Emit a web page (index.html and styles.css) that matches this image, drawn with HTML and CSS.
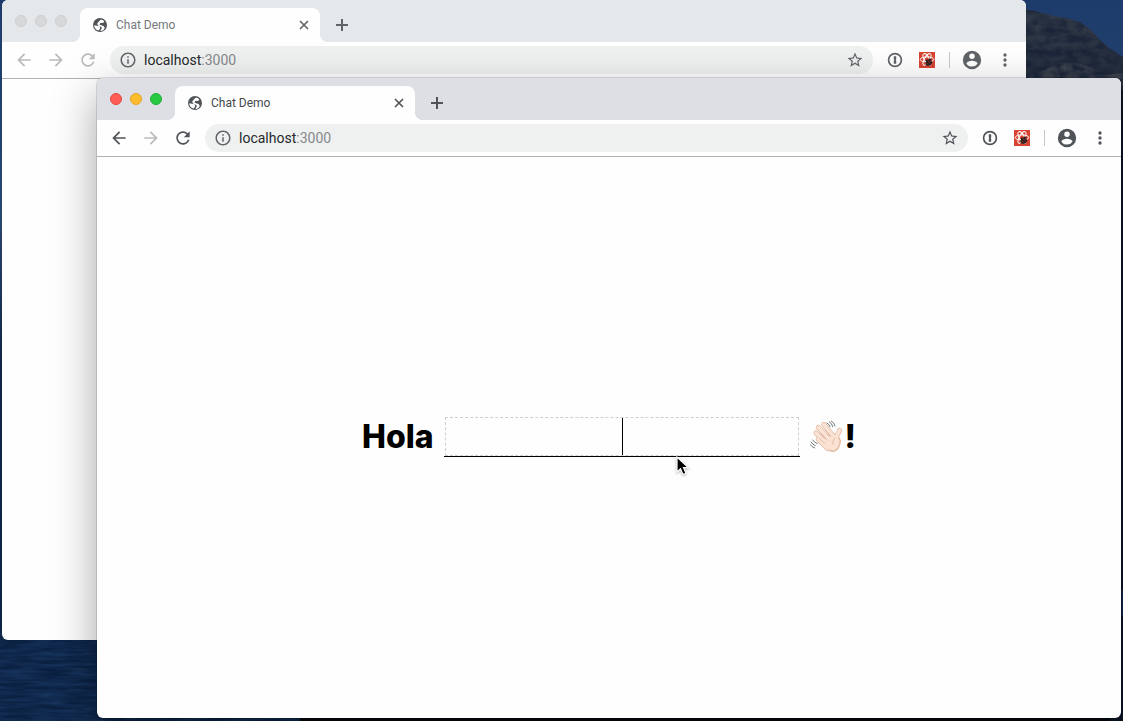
FILE: index.html
```html
<!DOCTYPE html>
<html lang="en">
<head>
<meta charset="utf-8">
<title>Chat Demo</title>
<link rel="stylesheet" href="styles.css">
</head>
<body>
<svg class="sprites" aria-hidden="true">
  <symbol id="globe" viewBox="0 0 24 24"><path d="M12 0a12 12 0 1 0 0 24 12 12 0 0 0 0-24zM2.200 12.500L9 13.500l3 1.500v3l-2 3.500C5.500 21 2 17 2.200 12.500zM13.500 2.500l4 1.500 2 3-3 1.500-3.500-.3-2 2.800 3 1.500 4 1 2.200 3-1.700 3.500-3.500 2.200-2.500-.7 2.500-3.500-.5-2.500-5-1.800-2.500-3.700 3-4z" fill-rule="evenodd"/></symbol>
  <symbol id="close" viewBox="0 0 10 10"><path d="M1 1l8 8M9 1L1 9" fill="none" stroke="currentColor" stroke-width="1.700"/></symbol>
  <symbol id="plus" viewBox="0 0 12 12"><path d="M6 0v12M0 6h12" fill="none" stroke="currentColor" stroke-width="2"/></symbol>
  <symbol id="back" viewBox="0 0 24 24"><path d="M20 11H7.800l5.600-5.600L12 4l-8 8 8 8 1.400-1.400L7.800 13H20z"/></symbol>
  <symbol id="forward" viewBox="0 0 24 24"><path d="M4 11h12.200l-5.600-5.600L12 4l8 8-8 8-1.400-1.400 5.600-5.600H4z"/></symbol>
  <symbol id="reload" viewBox="0 0 24 24"><path d="M17.650 6.350C16.200 4.900 14.210 4 12 4c-4.420 0-7.990 3.580-7.990 8s3.570 8 7.990 8c3.730 0 6.840-2.550 7.730-6h-2.080c-.82 2.330-3.040 4-5.650 4-3.310 0-6-2.690-6-6s2.690-6 6-6c1.660 0 3.140.69 4.220 1.780L13 11h7V4z"/></symbol>
  <symbol id="info" viewBox="0 0 24 24"><path d="M11 7h2v2h-2zm0 4h2v6h-2zm1-9C6.480 2 2 6.480 2 12s4.480 10 10 10 10-4.480 10-10S17.520 2 12 2zm0 18c-4.410 0-8-3.590-8-8s3.590-8 8-8 8 3.590 8 8-3.590 8-8 8z"/></symbol>
  <symbol id="star" viewBox="0 0 24 24"><path d="M22 9.240l-7.190-.62L12 2 9.190 8.630 2 9.240l5.460 4.730L5.820 21 12 17.270 18.180 21l-1.630-7.030L22 9.240zM12 15.400l-3.760 2.270 1-4.280-3.320-2.880 4.380-.38L12 6.100l1.710 4.040 4.380.38-3.320 2.880 1 4.280L12 15.400z"/></symbol>
  <symbol id="keyhole" viewBox="0 0 16 16"><circle cx="8" cy="8" r="6.400" fill="none" stroke="currentColor" stroke-width="1.700"/><path d="M6.800 4.200h2.400v3L8.700 8l.5.800v3H6.800v-3l.5-.8-.5-.8z"/></symbol>
  <symbol id="atom" viewBox="0 0 16 16">
    <path fill="#d94432" d="M0 0h16v16H0z"/>
    <g fill="none" stroke="#fff" stroke-width="1"><ellipse cx="8" cy="7.500" rx="6.800" ry="2.600"/><ellipse cx="8" cy="7.500" rx="6.500" ry="2.600" transform="rotate(60 8 7.500)"/><ellipse cx="8" cy="7.500" rx="6.500" ry="2.600" transform="rotate(120 8 7.500)"/></g>
    <path fill="#2b2020" d="M6.500 8.200l1.700-1 1 .8 1.500-1.700 1.800.6-.3 1.800 1.300 1.500-1 2.400-2.500 1.500-2-.7-1.700.3.700-1.800-1-1.400 1.200-.8z"/>
    <path d="M8.500 8.500l2.500 3M7.500 11.200l2 1M11 8l1 2" stroke="#b33d30" stroke-width=".6"/>
  </symbol>
  <symbol id="account" viewBox="0 0 24 24"><path d="M12 2a10 10 0 1 0 0 20 10 10 0 0 0 0-20zm0 3a3 3 0 1 1 0 6 3 3 0 0 1 0-6zm0 14.200c-2.500 0-4.710-1.280-6-3.220.03-1.990 4-3.080 6-3.080s5.970 1.090 6 3.080A7.200 7.200 0 0 1 12 19.200z" fill-rule="evenodd"/></symbol>
  <symbol id="more" viewBox="0 0 24 24"><circle cx="12" cy="6" r="2"/><circle cx="12" cy="12" r="2"/><circle cx="12" cy="18" r="2"/></symbol>
</svg>

<div class="desktop">
  <svg class="wallpaper" viewBox="0 0 1123 721" preserveAspectRatio="none" aria-hidden="true">
    <defs>
      <linearGradient id="sky" x2="0" y2="1"><stop offset="0" stop-color="#1e3c6b"/><stop offset=".3" stop-color="#29466f"/><stop offset=".5" stop-color="#102644"/><stop offset="1" stop-color="#0b2142"/></linearGradient>
      <linearGradient id="ridge" x2="0" y2="1"><stop offset="0" stop-color="#343c49"/><stop offset="1" stop-color="#1b2536"/></linearGradient>
      <filter id="waves" x="0" y="0" width="1" height="1" color-interpolation-filters="sRGB"><feTurbulence type="fractalNoise" baseFrequency=".03 .3" numOctaves="3" seed="4"/><feColorMatrix values="0 0 0 0 .1  0 0 0 0 .22  0 0 0 0 .39  0 0 0 1.600 -.5"/></filter>
      <filter id="rock" x="0" y="0" width="1" height="1" color-interpolation-filters="sRGB"><feTurbulence type="fractalNoise" baseFrequency=".09 .14" numOctaves="4" seed="8"/><feColorMatrix values="0 0 0 0 .1  0 0 0 0 .14  0 0 0 0 .22  0 0 0 2 -.6"/><feComposite in2="SourceGraphic" operator="in"/></filter>
    </defs>
    <path fill="url(#sky)" d="M0 0h1123v721H0z"/>
    <path fill="#0b2142" d="M0 630h300v91H0z"/>
    <path filter="url(#waves)" d="M0 630h300v91H0z"/>
    <path fill="url(#ridge)" d="M1020 8l14 3 20 5 12 2 14 4 12 9 8 9 9 8 14 9v60h-103z"/>
    <path fill="#3a414c" d="M1026 78l18-8 14-7 15-1 18 5 14 8 18-2v12h-97z"/>
    <path filter="url(#rock)" d="M1020 8l14 3 20 5 12 2 14 4 12 9 8 9 9 8 14 9v60h-103z"/>
    <path fill="#0c1627" d="M1100 90h23v631h-23z"/>
    <path fill="#10284a" d="M1118 590h5v26h-5z"/>
    <path fill="#06090f" d="M300 716h810v5H300z"/>
  </svg>

  <section class="window window-back" aria-label="Background window">
    <header class="tab-strip">
      <div class="lights"><button class="light" aria-label="Close window"></button><button class="light" aria-label="Minimize window"></button><button class="light" aria-label="Zoom window"></button></div>
      <div class="tab">
        <svg class="favicon"><use href="#globe"/></svg>
        <span class="tab-title">Chat Demo</span>
        <button class="icon-button" aria-label="Close tab"><svg class="close-icon"><use href="#close"/></svg></button>
      </div>
      <button class="icon-button new-tab" aria-label="New tab"><svg class="plus-icon"><use href="#plus"/></svg></button>
    </header>
    <nav class="toolbar">
      <div class="history">
        <button class="icon-button faded" aria-label="Back"><svg class="nav-icon"><use href="#back"/></svg></button>
        <button class="icon-button faded" aria-label="Forward"><svg class="nav-icon"><use href="#forward"/></svg></button>
        <button class="icon-button faded" aria-label="Reload"><svg class="nav-icon"><use href="#reload"/></svg></button>
      </div>
      <div class="address">
        <svg class="info-icon"><use href="#info"/></svg>
        <div class="url" role="textbox" contenteditable="true" spellcheck="false" aria-label="Address">localhost<span class="port">:3000</span></div>
        <button class="icon-button" aria-label="Bookmark"><svg class="star-icon"><use href="#star"/></svg></button>
      </div>
      <div class="extensions">
        <button class="icon-button" aria-label="Passwords"><svg class="extension-icon"><use href="#keyhole"/></svg></button>
        <button class="icon-button" aria-label="Developer tools"><svg class="extension-icon"><use href="#atom"/></svg></button>
        <span class="divider"></span>
        <button class="icon-button" aria-label="Profile"><svg class="account-icon"><use href="#account"/></svg></button>
        <button class="icon-button menu-button" aria-label="Menu"><svg class="nav-icon"><use href="#more"/></svg></button>
      </div>
    </nav>
    <main class="page"></main>
  </section>

  <section class="window window-front" aria-label="Active window">
    <header class="tab-strip">
      <div class="lights"><button class="light light-close" aria-label="Close window"></button><button class="light light-minimize" aria-label="Minimize window"></button><button class="light light-zoom" aria-label="Zoom window"></button></div>
      <div class="tab">
        <svg class="favicon"><use href="#globe"/></svg>
        <span class="tab-title">Chat Demo</span>
        <button class="icon-button" aria-label="Close tab"><svg class="close-icon"><use href="#close"/></svg></button>
      </div>
      <button class="icon-button new-tab" aria-label="New tab"><svg class="plus-icon"><use href="#plus"/></svg></button>
    </header>
    <nav class="toolbar">
      <div class="history">
        <button class="icon-button" aria-label="Back"><svg class="nav-icon"><use href="#back"/></svg></button>
        <button class="icon-button faded" aria-label="Forward"><svg class="nav-icon"><use href="#forward"/></svg></button>
        <button class="icon-button" aria-label="Reload"><svg class="nav-icon"><use href="#reload"/></svg></button>
      </div>
      <div class="address">
        <svg class="info-icon"><use href="#info"/></svg>
        <div class="url" role="textbox" contenteditable="true" spellcheck="false" aria-label="Address">localhost<span class="port">:3000</span></div>
        <button class="icon-button" aria-label="Bookmark"><svg class="star-icon"><use href="#star"/></svg></button>
      </div>
      <div class="extensions">
        <button class="icon-button" aria-label="Passwords"><svg class="extension-icon"><use href="#keyhole"/></svg></button>
        <button class="icon-button" aria-label="Developer tools"><svg class="extension-icon"><use href="#atom"/></svg></button>
        <span class="divider"></span>
        <button class="icon-button" aria-label="Profile"><svg class="account-icon"><use href="#account"/></svg></button>
        <button class="icon-button menu-button" aria-label="Menu"><svg class="nav-icon"><use href="#more"/></svg></button>
      </div>
    </nav>
    <main class="page">
      <form class="greeting">
        <label for="name">Hola</label>
        <div class="name-field"><input id="name" type="text" autocomplete="off"><span class="caret"></span></div>
        <div class="wave">
          <svg class="hand" viewBox="0 0 105 105" role="img" aria-label="Waving hand">
            <g fill="none" stroke-linecap="round" stroke-linejoin="round">
              <g stroke="#dfb79d" stroke-width="15"><path d="M41 16l34 42M25 25l36 40M18 42l36 36M25 61l28 27"/></g>
              <path d="M79 73C75 58 80 50 89 34" stroke="#dfb79d" stroke-width="15"/>
              <path d="M48 48L82 50 91 64C91 80 82 97 67 97C54 95 42 82 36 69z" fill="#f7dfcf" stroke="#dfb79d" stroke-width="4"/>
              <g stroke="#fae3d4" stroke-width="11"><path d="M41 16l34 42M25 25l36 40M18 42l36 36M25 61l28 27"/></g>
              <path d="M79 73C75 58 80 50 89 34" stroke="#fae3d4" stroke-width="11"/>
              <path d="M53 54L75 50 87 65C87 80 80 94 67 94C55 92 46 82 42 71z" fill="#fae2d3" stroke="none"/>
              <path d="M47 34l16 19M32 42l19 21M29 59l15 14M75 57c-6 6-8 12-6 19" stroke="#ddb298" stroke-width="2.500"/>
              <path d="M58 8q8 4 10 15M64 6q9 5 11 15M51 12q7 3 9 11M3 69q5 8 13 11M8 63q6 8 14 11M1 77q5 8 13 10" stroke="#555b60" stroke-width="2.500"/>
            </g>
          </svg>
          <span>!</span>
        </div>
      </form>
    </main>
  </section>

  <svg class="pointer" viewBox="0 0 14 20" aria-hidden="true"><path d="M1 1v15l3.500-3.300L7 18.500l3-1.300-2.500-5.500h5z" fill="#000" stroke="#fff" stroke-width="1.200"/></svg>
</div>
</body>
</html>
```
FILE: styles.css
```css
* { box-sizing: border-box; }

body {
  margin: 0;
  font-family: Roboto, "Liberation Sans", sans-serif;
  color: #26282b;
}

.sprites { display: none; }

svg { display: block; fill: currentColor; }

.desktop {
  position: relative;
  height: 100vh;
  overflow: hidden;
  background: #0b2142;
}

.wallpaper {
  position: absolute;
  inset: 0;
  width: 100%;
  height: 100%;
}

.window {
  position: absolute;
  display: flex;
  flex-direction: column;
  overflow: hidden;
  border-radius: 6px;
  background: #fefefe;
}

.window-back {
  inset: 0 97px 81px 2px;
  --strip: #e4e8eb;
  --ink: #606469;
  --title: #75787b;
}

.window-front {
  inset: 78px 2px 3px 97px;
  --strip: #dddfe5;
  --ink: #505459;
  --title: #45484c;
  box-shadow: 0 0 0 1px rgba(0, 0, 0, .12), 0 16px 44px rgba(0, 0, 0, .36);
}

.tab-strip {
  display: flex;
  height: 42px;
  background: var(--strip);
}

.lights {
  display: flex;
  gap: 8px;
  width: 78px;
  padding: 15px 0 0 13px;
}

.light {
  width: 12px;
  height: 12px;
  padding: 0;
  border: 1px solid #ccced0;
  border-radius: 50%;
  background: #d6d8d9;
}

.light-close { background: #ff5d55; border-color: #e5483f; }
.light-minimize { background: #ffbd2c; border-color: #e2a226; }
.light-zoom { background: #27ca40; border-color: #1eb033; }

.tab {
  position: relative;
  display: flex;
  align-items: center;
  width: 240px;
  margin-top: 8px;
  padding: 0 11px 0 13px;
  border-radius: 8px 8px 0 0;
  background: #fefefe;
}

.tab::before,
.tab::after {
  content: "";
  position: absolute;
  bottom: 0;
  width: 8px;
  height: 8px;
}

.tab::before {
  right: 100%;
  background: radial-gradient(circle at 0 0, var(--strip) 8px, #fefefe 8px);
}

.tab::after {
  left: 100%;
  background: radial-gradient(circle at 100% 0, var(--strip) 8px, #fefefe 8px);
}

.favicon { width: 14px; height: 14px; color: #505459; }

.tab-title {
  flex: 1;
  margin-left: 9px;
  font-size: 12px;
  line-height: 16px;
  color: var(--title);
}

.icon-button {
  display: flex;
  align-items: center;
  justify-content: center;
  padding: 0;
  border: 0;
  background: none;
  color: var(--ink);
}

.close-icon { width: 10px; height: 10px; }

.new-tab { margin: 8px 0 0 16px; }

.plus-icon { width: 12px; height: 12px; }

.toolbar {
  display: flex;
  align-items: center;
  height: 37px;
  padding: 0 11px 0 12px;
  border-bottom: 1px solid #b2b2b2;
}

.history { display: flex; gap: 12px; }

.nav-icon { width: 20px; height: 20px; }

.icon-button.faded { color: #b9bbbd; }

.address {
  display: flex;
  flex: 1;
  align-items: center;
  height: 28px;
  margin-left: 12px;
  padding: 0 9px;
  border-radius: 14px;
  background: #eff1f1;
}

.info-icon { width: 18px; height: 18px; color: #606469; }

.url {
  flex: 1;
  margin-left: 7px;
  font-size: 14px;
  line-height: 20px;
  outline: 0;
}

.port { color: #85888b; }

.star-icon { width: 18px; height: 18px; }

.extensions { display: flex; align-items: center; margin-left: 14px; }

.extension-icon { width: 16px; height: 16px; }

.extensions .icon-button + .icon-button { margin-left: 16px; }

.extensions .icon-button + .menu-button { margin-left: 12px; }

.divider {
  width: 1px;
  height: 16px;
  margin: 0 11px 0 14px;
  background: #c6c8ca;
}

.account-icon { width: 22px; height: 22px; }

.page {
  display: flex;
  flex: 1;
  align-items: center;
  justify-content: center;
}

.greeting {
  display: flex;
  align-items: center;
  gap: 10px;
  padding-bottom: 2px;
  font-family: Inter, "Liberation Sans", sans-serif;
  font-size: 32px;
  font-weight: 800;
  line-height: 40px;
  color: #000;
}

.name-field {
  position: relative;
  padding: 0 1px;
  border-bottom: 1px solid #000;
}

.name-field input {
  display: block;
  width: 354px;
  height: 39px;
  padding: 0;
  border: 1px dashed #cfcfcf;
  outline: 0;
  background: none;
  font: inherit;
  text-align: center;
}

.caret {
  position: absolute;
  top: 1px;
  bottom: 1px;
  left: 50%;
  width: 1px;
  background: #000;
}

.wave { display: flex; align-items: center; }

.hand { width: 35px; height: 35px; }

.pointer {
  position: absolute;
  top: 456px;
  left: 676px;
  width: 14px;
  height: 20px;
  filter: drop-shadow(0 1px 1px rgba(0, 0, 0, .3));
}
```
